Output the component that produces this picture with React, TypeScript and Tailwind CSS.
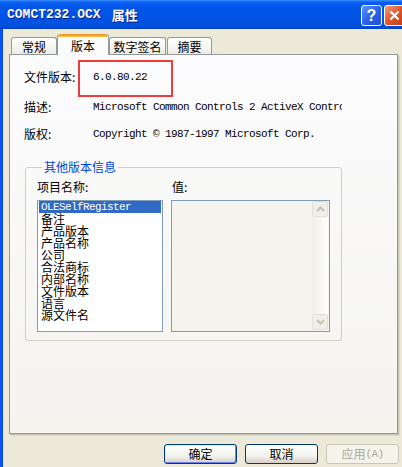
import React from "react";

const cjk = "font-['Noto_Sans_CJK_SC',sans-serif] text-[12px]";
const mono = "font-['Liberation_Mono','Noto_Sans_CJK_SC',monospace] text-[11px] tracking-[-0.6px]";

function Chevron({ up }: { up?: boolean }) {
  return (
    <svg width="9" height="6" viewBox="0 0 9 6">
      <polyline
        points={up ? "1,5 4.5,1.5 8,5" : "1,1 4.5,4.5 8,1"}
        fill="none"
        stroke="#C5C2B2"
        strokeWidth="2"
      />
    </svg>
  );
}

function Tab({ label, active, w }: { label: string; active?: boolean; w: string }) {
  if (active) {
    return (
      <div
        className={`relative z-10 mb-[-1px] h-[21px] ${w} rounded-t-[3px] border-x border-[#919B9C] bg-[#FCFCFE] flex flex-col`}
      >
        <div className="h-[3px] rounded-t-[3px] bg-[linear-gradient(to_bottom,#E68B2C,#FFC73C)]" />
        <div className={`${cjk} flex-1 flex items-center justify-center leading-[14px] text-black`}>{label}</div>
      </div>
    );
  }
  return (
    <div
      className={`h-[17px] ${w} rounded-t-[3px] border-x border-t border-[#919B9C] bg-[linear-gradient(to_bottom,#FFFFFF,#F3F3EF_70%,#ECEBE6)] flex items-center justify-center ${cjk} leading-[14px] text-black pt-[1px]`}
    >
      {label}
    </div>
  );
}

export default function App() {
  const items = ["备注", "产品版本", "产品名称", "公司", "合法商标", "内部名称", "文件版本", "语言", "源文件名"];
  return (
    <div className="w-[402px] h-[467px] overflow-hidden flex flex-col bg-[#ECE9D8]">
      {/* Title bar */}
      <div className="h-[29px] shrink-0 flex items-center bg-[linear-gradient(to_bottom,#3D8FFF_0%,#0A5FF0_8%,#0055E8_30%,#0052E3_70%,#0050DD_90%,#003FC8_100%)]">
        <div className="ml-[7px] flex items-center text-white [text-shadow:1px_1px_0_#0A1F8A]">
          <span className="font-['Liberation_Mono',monospace] text-[13px] font-bold leading-[14px]">COMCT232.OCX</span>
          <span className="ml-[11px] font-['Noto_Sans_CJK_SC',sans-serif] text-[13px] font-bold leading-[14px]">属性</span>
        </div>
        <div className="flex-1" />
        <div className="flex gap-[2px] mr-[-3px] mt-[2px]">
          <div className="w-[21px] h-[21px] rounded-[3px] border border-white bg-[linear-gradient(135deg,#5C94FF,#2A62E8_50%,#1C4FD6)] flex items-center justify-center">
            <span className="font-['Liberation_Sans',sans-serif] text-[16px] font-bold leading-none text-white">?</span>
          </div>
          <div className="w-[21px] h-[21px] rounded-[3px] border border-white bg-[linear-gradient(135deg,#F29A7C,#E0552C_50%,#C23C14)] flex items-center justify-center">
            <svg width="11" height="11" viewBox="0 0 11 11">
              <path d="M1.5 1.5 L9.5 9.5 M9.5 1.5 L1.5 9.5" stroke="white" strokeWidth="2.2" />
            </svg>
          </div>
        </div>
      </div>

      {/* Body */}
      <div className="flex flex-1">
        <div className="w-[3px] bg-[linear-gradient(to_right,#0A4FE8,#0B5CF5_60%,#0034C8)]" />
        <div className="flex-1 flex flex-col">
          {/* Tabs */}
          <div className="flex items-end pl-[8px] pt-[5px]">
            <Tab label="常规" w="w-[46px]" />
            <Tab label="版本" active w="w-[52px]" />
            <Tab label="数字签名" w="w-[57px]" />
            <div className="w-[1px]" />
            <Tab label="摘要" w="w-[45px]" />
          </div>

          {/* Panel */}
          <div className="relative ml-[6px] w-[389px] h-[380px] border border-[#919B9C] bg-[linear-gradient(to_bottom,#FCFCFE,#F4F3EE)] shadow-[1px_1px_0_#C4C1B1,2px_2px_0_#DDDACB] pt-[15px] pl-[14px]">
            <div className="absolute left-[68px] top-[5px] w-[95px] h-[37px] border-2 border-[#EE3B3B]" />

            <div className="flex h-[14px] items-center">
              <div className={`w-[69px] ${cjk} leading-[14px] text-black`}>文件版本:</div>
              <div className={`${mono} leading-[14px] text-black`}>6.0.80.22</div>
            </div>
            <div className="flex h-[14px] items-center mt-[16px]">
              <div className={`w-[69px] ${cjk} leading-[14px] text-black`}>描述:</div>
              <div className={`w-[249px] overflow-hidden whitespace-nowrap ${mono} leading-[14px] text-black`}>
                Microsoft Common Controls 2 ActiveX Control
              </div>
            </div>
            <div className="flex h-[14px] items-center mt-[13px]">
              <div className={`w-[69px] ${cjk} leading-[14px] text-black`}>版权:</div>
              <div className={`${mono} leading-[14px] text-black whitespace-nowrap`}>
                Copyright © 1987-1997 Microsoft Corp.
              </div>
            </div>

            <fieldset className="mt-[19px] ml-[1px] w-[317px] rounded-[3px] border border-[#D0D0BF] pl-[11px] pr-[10px] pt-[6px] pb-[8px]">
              <legend className={`ml-[5px] px-[2px] ${cjk} leading-[14px] text-[#0046D5]`}>其他版本信息</legend>
              <div className="grid grid-cols-[126px_159px] gap-x-[8px]">
                <div className={`${cjk} leading-[14px] text-black`}>项目名称:</div>
                <div className={`${cjk} leading-[14px] text-black pl-[1px]`}>值:</div>
                <div className="mt-[6px] h-[132px] border border-[#7F9DB9] bg-white px-[1px] overflow-hidden">
                  <div className={`bg-[#316AC5] text-white px-[2px] h-[12px] ${mono} leading-[12px]`}>OLESelfRegister</div>
                  {items.map((it) => (
                    <div key={it} className={`px-[2px] h-[12px] ${cjk} leading-[12px] text-black`}>
                      {it}
                    </div>
                  ))}
                </div>
                <div className="mt-[6px] h-[132px] border border-[#7F9DB9] bg-[#F4F3EE] flex justify-end pr-[1px]">
                  <div className="w-[16px] flex flex-col justify-between pb-[1px] bg-[linear-gradient(to_right,#F0EFE9,#FDFDFA)]">
                    <div className="h-[16px] rounded-[2px] border border-[#E3E1D8] bg-[#EFEEE8] flex items-center justify-center">
                      <Chevron up />
                    </div>
                    <div className="h-[16px] rounded-[2px] border border-[#E3E1D8] bg-[#EFEEE8] flex items-center justify-center">
                      <Chevron />
                    </div>
                  </div>
                </div>
              </div>
            </fieldset>
          </div>

          {/* Buttons */}
          <div className="flex gap-[8px] pl-[161px] mt-[10px]">
            <div className={`w-[73px] h-[20px] rounded-[3px] border border-[#003C74] bg-[linear-gradient(to_bottom,#FFFFFF,#F3F3EF_60%,#D6D0C5)] shadow-[inset_1px_1px_0_#CEE7FF,inset_-1px_-1px_0_#6982EE] flex items-center justify-center ${cjk} leading-[14px] text-black`}>
              确定
            </div>
            <div className={`w-[73px] h-[20px] rounded-[3px] border border-[#003C74] bg-[linear-gradient(to_bottom,#FFFFFF,#F3F3EF_60%,#D6D0C5)] flex items-center justify-center ${cjk} leading-[14px] text-black`}>
              取消
            </div>
            <div className={`w-[73px] h-[20px] rounded-[3px] border border-[#C9C7BA] bg-[#F5F4EA] flex items-center justify-center leading-[14px] text-[#ACA899]`}>
              <span className={cjk}>应用</span>
              <span className={mono}>(A)</span>
            </div>
          </div>
        </div>
      </div>
    </div>
  );
}
